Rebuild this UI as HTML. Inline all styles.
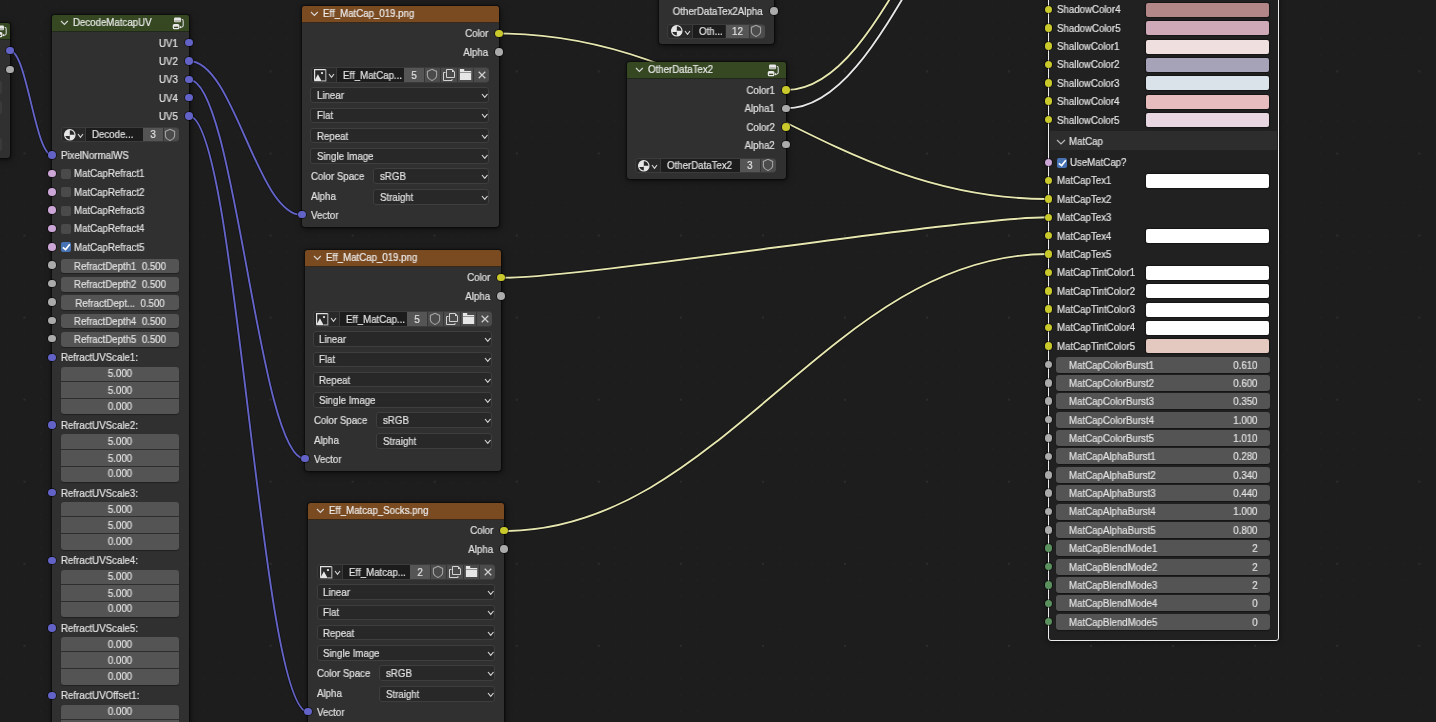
<!DOCTYPE html>
<html><head><meta charset="utf-8"><style>
html,body{margin:0;padding:0;}
body{width:1436px;height:722px;overflow:hidden;position:relative;background:#1d1d1d;font-family:"Liberation Sans", sans-serif;}
.t{position:absolute;white-space:nowrap;line-height:14px;height:14px;will-change:transform;-webkit-text-stroke:0.2px currentColor;}
</style></head><body>

<svg style="position:absolute;left:0;top:0" width="1436" height="722"><defs><pattern id="gm" x="7.2" y="5.2" width="16.41" height="16.41" patternUnits="userSpaceOnUse"><circle cx="0.7" cy="0.7" r="0.6" fill="#242424"/></pattern><pattern id="gM" x="23.5" y="70.5" width="82.05" height="82.05" patternUnits="userSpaceOnUse"><circle cx="0.9" cy="0.9" r="1.05" fill="#2e2e2e"/></pattern></defs><rect width="1436" height="722" fill="url(#gm)"/><rect width="1436" height="722" fill="url(#gM)"/><path d="M10 50.7 C26.80 50.7 35.20 155 52 155" fill="none" stroke="rgba(0,0,0,0.45)" stroke-width="3.3"/><path d="M10 50.7 C26.80 50.7 35.20 155 52 155" fill="none" stroke="#6464c8" stroke-width="1.9"/><path d="M189 61 C234.20 61 256.80 215 302 215" fill="none" stroke="rgba(0,0,0,0.45)" stroke-width="3.3"/><path d="M189 61 C234.20 61 256.80 215 302 215" fill="none" stroke="#6464c8" stroke-width="1.9"/><path d="M189 79.5 C235.40 79.5 258.60 459 305 459" fill="none" stroke="rgba(0,0,0,0.45)" stroke-width="3.3"/><path d="M189 79.5 C235.40 79.5 258.60 459 305 459" fill="none" stroke="#6464c8" stroke-width="1.9"/><path d="M189 116 C236.60 116 260.40 712 308 712" fill="none" stroke="rgba(0,0,0,0.45)" stroke-width="3.3"/><path d="M189 116 C236.60 116 260.40 712 308 712" fill="none" stroke="#6464c8" stroke-width="1.9"/><path d="M498.5 33.5 C718.30 33.5 828.20 199 1048 199" fill="none" stroke="rgba(0,0,0,0.45)" stroke-width="3.3"/><path d="M498.5 33.5 C718.30 33.5 828.20 199 1048 199" fill="none" stroke="#e6e6b0" stroke-width="1.9"/><path d="M501.5 277.8 C589.23 277.8 960.27 217.3 1048 217.3" fill="none" stroke="rgba(0,0,0,0.45)" stroke-width="3.3"/><path d="M501.5 277.8 C589.23 277.8 960.27 217.3 1048 217.3" fill="none" stroke="#e6e6b0" stroke-width="1.9"/><path d="M504 531 C721.60 531 830.40 254 1048 254" fill="none" stroke="rgba(0,0,0,0.45)" stroke-width="3.3"/><path d="M504 531 C721.60 531 830.40 254 1048 254" fill="none" stroke="#e6e6b0" stroke-width="1.9"/><path d="M786 90 C890.80 90 943.20 -185 1048 -185" fill="none" stroke="rgba(0,0,0,0.45)" stroke-width="3.3"/><path d="M786 90 C890.80 90 943.20 -185 1048 -185" fill="none" stroke="#e6e6b0" stroke-width="1.9"/><path d="M786 108.4 C890.80 108.4 943.20 -160 1048 -160" fill="none" stroke="rgba(0,0,0,0.45)" stroke-width="3.3"/><path d="M786 108.4 C890.80 108.4 943.20 -160 1048 -160" fill="none" stroke="#e6e6e6" stroke-width="1.9"/></svg>
<div style="position:absolute;left:-40px;top:23px;width:50px;height:135px;background:#303030;border-radius:3px;box-shadow:0 0 1.5px 0.5px rgba(0,0,0,0.5), 1px 2px 7px rgba(0,0,0,0.5)"></div>
<div style="position:absolute;left:-40px;top:23px;width:50px;height:16px;background:#354822;border-radius:3px 3px 0 0;box-shadow:0 1px 0 #21271b"></div>
<svg style="position:absolute;left:-5px;top:25px" width="13" height="13"><rect x="2" y="0.4" width="7" height="4.9" rx="1.2" fill="#e8e8e8"/><rect x="2.5" y="3.4" width="6" height="1.2" fill="#9aa08f"/><rect x="1.4" y="7.6" width="5.4" height="4.1" rx="1" fill="none" stroke="#e8e8e8" stroke-width="1.3"/><rect x="1.4" y="7.8" width="5.4" height="1.9" fill="#e8e8e8"/><path d="M9.6 2.2 Q11.2 2.2 11.2 4 L11.2 8.6 Q11.2 10.2 9.4 10.2 L8.4 10.2" fill="none" stroke="#d8d8d8" stroke-width="1.1"/><path d="M7.4 10.2 L9 8.8 L9 11.6 Z" fill="#e8e8e8"/></svg>
<div style="position:absolute;left:-40px;top:81.3px;width:41.5px;height:13px;background:#3a3a3a;border-radius:2px;"></div>
<div style="position:absolute;left:-40px;top:101px;width:41.5px;height:13px;background:#3a3a3a;border-radius:2px;"></div>
<div style="position:absolute;left:-40px;top:138.4px;width:41.5px;height:13px;background:#3a3a3a;border-radius:2px;"></div>
<div style="position:absolute;left:6.20px;top:46.90px;width:7.60px;height:7.60px;border-radius:50%;background:#6363c7;box-shadow:0 0 0 0.8px rgba(0,0,0,0.6)"></div>
<div style="position:absolute;left:6.20px;top:65.60px;width:7.60px;height:7.60px;border-radius:50%;background:#ababab;box-shadow:0 0 0 0.8px rgba(0,0,0,0.6)"></div>
<div style="position:absolute;left:52px;top:15px;width:137px;height:740px;background:#303030;border-radius:3px;box-shadow:0 0 1.5px 0.5px rgba(0,0,0,0.5), 1px 2px 7px rgba(0,0,0,0.5)"></div>
<div style="position:absolute;left:52px;top:15px;width:137px;height:16px;background:#354822;border-radius:3px 3px 0 0;box-shadow:0 1px 0 #21271b"></div>
<svg style="position:absolute;left:60px;top:20.2px" width="8.8" height="5.5"><path d="M1 1 L4.4 4.5 L7.8 1" fill="none" stroke="#d8d8d8" stroke-width="1.1"/></svg>
<div class="t" style="left:73px;top:16.20px;font-size:10.2px;color:#ececec;transform:scaleX(0.95);transform-origin:0 50%;">DecodeMatcapUV</div>
<svg style="position:absolute;left:172px;top:16.5px" width="13" height="13"><rect x="2" y="0.4" width="7" height="4.9" rx="1.2" fill="#e8e8e8"/><rect x="2.5" y="3.4" width="6" height="1.2" fill="#9aa08f"/><rect x="1.4" y="7.6" width="5.4" height="4.1" rx="1" fill="none" stroke="#e8e8e8" stroke-width="1.3"/><rect x="1.4" y="7.8" width="5.4" height="1.9" fill="#e8e8e8"/><path d="M9.6 2.2 Q11.2 2.2 11.2 4 L11.2 8.6 Q11.2 10.2 9.4 10.2 L8.4 10.2" fill="none" stroke="#d8d8d8" stroke-width="1.1"/><path d="M7.4 10.2 L9 8.8 L9 11.6 Z" fill="#e8e8e8"/></svg>
<div class="t" style="right:1258px;top:36.60px;font-size:10.2px;color:#e2e2e2;text-align:right;transform:scaleX(0.95);transform-origin:100% 50%;">UV1</div>
<div style="position:absolute;left:185.20px;top:38.90px;width:7.60px;height:7.60px;border-radius:50%;background:#6363c7;box-shadow:0 0 0 0.8px rgba(0,0,0,0.6)"></div>
<div class="t" style="right:1258px;top:54.90px;font-size:10.2px;color:#e2e2e2;text-align:right;transform:scaleX(0.95);transform-origin:100% 50%;">UV2</div>
<div style="position:absolute;left:185.20px;top:57.20px;width:7.60px;height:7.60px;border-radius:50%;background:#6363c7;box-shadow:0 0 0 0.8px rgba(0,0,0,0.6)"></div>
<div class="t" style="right:1258px;top:73.20px;font-size:10.2px;color:#e2e2e2;text-align:right;transform:scaleX(0.95);transform-origin:100% 50%;">UV3</div>
<div style="position:absolute;left:185.20px;top:75.50px;width:7.60px;height:7.60px;border-radius:50%;background:#6363c7;box-shadow:0 0 0 0.8px rgba(0,0,0,0.6)"></div>
<div class="t" style="right:1258px;top:91.50px;font-size:10.2px;color:#e2e2e2;text-align:right;transform:scaleX(0.95);transform-origin:100% 50%;">UV4</div>
<div style="position:absolute;left:185.20px;top:93.80px;width:7.60px;height:7.60px;border-radius:50%;background:#6363c7;box-shadow:0 0 0 0.8px rgba(0,0,0,0.6)"></div>
<div class="t" style="right:1258px;top:109.90px;font-size:10.2px;color:#e2e2e2;text-align:right;transform:scaleX(0.95);transform-origin:100% 50%;">UV5</div>
<div style="position:absolute;left:185.20px;top:112.20px;width:7.60px;height:7.60px;border-radius:50%;background:#6363c7;box-shadow:0 0 0 0.8px rgba(0,0,0,0.6)"></div>
<div style="position:absolute;box-sizing:border-box;left:61px;top:127.2px;width:117.80000000000001px;height:15.2px;background:#282828;border:1px solid #3b3b3b;border-radius:3px"></div>
<div style="position:absolute;left:85px;top:128.2px;width:1px;height:13.2px;background:#3b3b3b;border-radius:0;"></div>
<div style="position:absolute;left:86px;top:128.2px;width:57px;height:13.2px;background:#1c1c1c;border-radius:0;"></div>
<div style="position:absolute;left:143px;top:128.2px;width:20px;height:13.2px;background:#555555;border-radius:0;"></div>
<div style="position:absolute;left:164px;top:128.2px;width:14.800000000000011px;height:13.2px;background:#4b4b4b;border-radius:0 3px 3px 0;"></div>
<div style="position:absolute;left:163px;top:128.2px;width:1px;height:13.2px;background:#363636;border-radius:0;"></div>
<svg style="position:absolute;left:63.00px;top:128.00px" width="13.60" height="13.60" viewBox="-6.80 -6.80 13.60 13.60"><circle cx="0" cy="0" r="5.20" fill="none" stroke="#e6e6e6" stroke-width="1.2"/><path d="M0 1.3 L0 -5.20 A5.20 5.20 0 0 0 -5.05 1.3 Z" fill="#e6e6e6"/><path d="M0 0 L5.20 0 A5.20 5.20 0 0 1 0 5.20 Z" fill="#e6e6e6"/></svg>
<svg style="position:absolute;left:77.2px;top:133.20000000000002px" width="7" height="5.4"><path d="M1 1 L3.5 4.4 L6 1" fill="none" stroke="#d8d8d8" stroke-width="1.1"/></svg>
<div class="t" style="left:91.5px;top:128.40px;font-size:10.2px;color:#e2e2e2;transform:scaleX(0.95);transform-origin:0 50%;">Decode...</div>
<div class="t" style="left:143px;width:20px;top:128.40px;font-size:10.2px;color:#e2e2e2;text-align:center;transform:scaleX(0.95);transform-origin:50% 50%;">3</div>
<svg style="position:absolute;left:164.40px;top:127.80px" width="12" height="14"><path d="M6 1.3 L10.6 3.4 L10.6 8 Q10.2 10.6 6 12.5 Q1.8 10.6 1.4 8 L1.4 3.4 Z" fill="none" stroke="#a4a4a4" stroke-width="1.1" stroke-linejoin="miter"/></svg>
<div class="t" style="left:61px;top:148.90px;font-size:10.2px;color:#e2e2e2;transform:scaleX(0.95);transform-origin:0 50%;">PixelNormalWS</div>
<div style="position:absolute;left:48.20px;top:151.20px;width:7.60px;height:7.60px;border-radius:50%;background:#6363c7;box-shadow:0 0 0 0.8px rgba(0,0,0,0.6)"></div>
<div style="position:absolute;left:48.20px;top:169.70px;width:7.60px;height:7.60px;border-radius:50%;background:#cca6d6;box-shadow:0 0 0 0.8px rgba(0,0,0,0.6)"></div>
<div style="position:absolute;left:61px;top:168.9px;width:10px;height:10px;background:#4a4a4a;border-radius:2px"></div>
<div class="t" style="left:74px;top:167.40px;font-size:10.2px;color:#e2e2e2;transform:scaleX(0.95);transform-origin:0 50%;">MatCapRefract1</div>
<div style="position:absolute;left:48.20px;top:188.05px;width:7.60px;height:7.60px;border-radius:50%;background:#cca6d6;box-shadow:0 0 0 0.8px rgba(0,0,0,0.6)"></div>
<div style="position:absolute;left:61px;top:187.25px;width:10px;height:10px;background:#4a4a4a;border-radius:2px"></div>
<div class="t" style="left:74px;top:185.75px;font-size:10.2px;color:#e2e2e2;transform:scaleX(0.95);transform-origin:0 50%;">MatCapRefract2</div>
<div style="position:absolute;left:48.20px;top:206.40px;width:7.60px;height:7.60px;border-radius:50%;background:#cca6d6;box-shadow:0 0 0 0.8px rgba(0,0,0,0.6)"></div>
<div style="position:absolute;left:61px;top:205.6px;width:10px;height:10px;background:#4a4a4a;border-radius:2px"></div>
<div class="t" style="left:74px;top:204.10px;font-size:10.2px;color:#e2e2e2;transform:scaleX(0.95);transform-origin:0 50%;">MatCapRefract3</div>
<div style="position:absolute;left:48.20px;top:224.75px;width:7.60px;height:7.60px;border-radius:50%;background:#cca6d6;box-shadow:0 0 0 0.8px rgba(0,0,0,0.6)"></div>
<div style="position:absolute;left:61px;top:223.95000000000002px;width:10px;height:10px;background:#4a4a4a;border-radius:2px"></div>
<div class="t" style="left:74px;top:222.45px;font-size:10.2px;color:#e2e2e2;transform:scaleX(0.95);transform-origin:0 50%;">MatCapRefract4</div>
<div style="position:absolute;left:48.20px;top:243.10px;width:7.60px;height:7.60px;border-radius:50%;background:#cca6d6;box-shadow:0 0 0 0.8px rgba(0,0,0,0.6)"></div>
<div style="position:absolute;left:61px;top:242.3px;width:10px;height:10px;background:#4772b3;border-radius:2px"></div>
<svg style="position:absolute;left:61px;top:242.3px" width="10" height="10"><path d="M1.8 5.4 L4.6 7.6 L8.8 2.2" fill="none" stroke="#fff" stroke-width="1.7"/></svg>
<div class="t" style="left:74px;top:240.80px;font-size:10.2px;color:#e2e2e2;transform:scaleX(0.95);transform-origin:0 50%;">MatCapRefract5</div>
<div style="position:absolute;left:48.20px;top:261.45px;width:7.60px;height:7.60px;border-radius:50%;background:#ababab;box-shadow:0 0 0 0.8px rgba(0,0,0,0.6)"></div>
<div style="position:absolute;left:61px;top:258.55px;width:118px;height:14.8px;background:#545454;border-radius:3px;box-shadow:0 1px 1px rgba(0,0,0,0.35)"></div>
<div class="t" style="left:61px;width:118px;top:259.85px;font-size:10.2px;color:#e2e2e2;text-align:center;transform:scaleX(0.95);transform-origin:50% 50%;">RefractDepth1&nbsp;&nbsp;0.500</div>
<div style="position:absolute;left:48.20px;top:279.80px;width:7.60px;height:7.60px;border-radius:50%;background:#ababab;box-shadow:0 0 0 0.8px rgba(0,0,0,0.6)"></div>
<div style="position:absolute;left:61px;top:276.90000000000003px;width:118px;height:14.8px;background:#545454;border-radius:3px;box-shadow:0 1px 1px rgba(0,0,0,0.35)"></div>
<div class="t" style="left:61px;width:118px;top:278.20px;font-size:10.2px;color:#e2e2e2;text-align:center;transform:scaleX(0.95);transform-origin:50% 50%;">RefractDepth2&nbsp;&nbsp;0.500</div>
<div style="position:absolute;left:48.20px;top:298.15px;width:7.60px;height:7.60px;border-radius:50%;background:#ababab;box-shadow:0 0 0 0.8px rgba(0,0,0,0.6)"></div>
<div style="position:absolute;left:61px;top:295.25px;width:118px;height:14.8px;background:#545454;border-radius:3px;box-shadow:0 1px 1px rgba(0,0,0,0.35)"></div>
<div class="t" style="left:61px;width:118px;top:296.55px;font-size:10.2px;color:#e2e2e2;text-align:center;transform:scaleX(0.95);transform-origin:50% 50%;">RefractDept...&nbsp;&nbsp;0.500</div>
<div style="position:absolute;left:48.20px;top:316.50px;width:7.60px;height:7.60px;border-radius:50%;background:#ababab;box-shadow:0 0 0 0.8px rgba(0,0,0,0.6)"></div>
<div style="position:absolute;left:61px;top:313.6px;width:118px;height:14.8px;background:#545454;border-radius:3px;box-shadow:0 1px 1px rgba(0,0,0,0.35)"></div>
<div class="t" style="left:61px;width:118px;top:314.90px;font-size:10.2px;color:#e2e2e2;text-align:center;transform:scaleX(0.95);transform-origin:50% 50%;">RefractDepth4&nbsp;&nbsp;0.500</div>
<div style="position:absolute;left:48.20px;top:334.85px;width:7.60px;height:7.60px;border-radius:50%;background:#ababab;box-shadow:0 0 0 0.8px rgba(0,0,0,0.6)"></div>
<div style="position:absolute;left:61px;top:331.95px;width:118px;height:14.8px;background:#545454;border-radius:3px;box-shadow:0 1px 1px rgba(0,0,0,0.35)"></div>
<div class="t" style="left:61px;width:118px;top:333.25px;font-size:10.2px;color:#e2e2e2;text-align:center;transform:scaleX(0.95);transform-origin:50% 50%;">RefractDepth5&nbsp;&nbsp;0.500</div>
<div style="position:absolute;left:48.20px;top:353.70px;width:7.60px;height:7.60px;border-radius:50%;background:#6363c7;box-shadow:0 0 0 0.8px rgba(0,0,0,0.6)"></div>
<div class="t" style="left:61px;top:351.40px;font-size:10.2px;color:#e2e2e2;transform:scaleX(0.95);transform-origin:0 50%;">RefractUVScale1:</div>
<div style="position:absolute;left:61px;top:366.70px;width:118px;height:47.7px;background:#545454;border-radius:3px;box-shadow:0 1px 1px rgba(0,0,0,0.35)"></div>
<div style="position:absolute;left:61px;top:380.90px;width:118px;height:1px;background:#2e2e2e;border-radius:0;"></div>
<div style="position:absolute;left:61px;top:398.00px;width:118px;height:1px;background:#2e2e2e;border-radius:0;"></div>
<div class="t" style="left:61px;width:118px;top:367.40px;font-size:10.2px;color:#e2e2e2;text-align:center;transform:scaleX(0.95);transform-origin:50% 50%;">5.000</div>
<div class="t" style="left:61px;width:118px;top:383.90px;font-size:10.2px;color:#e2e2e2;text-align:center;transform:scaleX(0.95);transform-origin:50% 50%;">5.000</div>
<div class="t" style="left:61px;width:118px;top:399.60px;font-size:10.2px;color:#e2e2e2;text-align:center;transform:scaleX(0.95);transform-origin:50% 50%;">0.000</div>
<div style="position:absolute;left:48.20px;top:421.30px;width:7.60px;height:7.60px;border-radius:50%;background:#6363c7;box-shadow:0 0 0 0.8px rgba(0,0,0,0.6)"></div>
<div class="t" style="left:61px;top:419.00px;font-size:10.2px;color:#e2e2e2;transform:scaleX(0.95);transform-origin:0 50%;">RefractUVScale2:</div>
<div style="position:absolute;left:61px;top:434.30px;width:118px;height:47.7px;background:#545454;border-radius:3px;box-shadow:0 1px 1px rgba(0,0,0,0.35)"></div>
<div style="position:absolute;left:61px;top:448.50px;width:118px;height:1px;background:#2e2e2e;border-radius:0;"></div>
<div style="position:absolute;left:61px;top:465.60px;width:118px;height:1px;background:#2e2e2e;border-radius:0;"></div>
<div class="t" style="left:61px;width:118px;top:435.00px;font-size:10.2px;color:#e2e2e2;text-align:center;transform:scaleX(0.95);transform-origin:50% 50%;">5.000</div>
<div class="t" style="left:61px;width:118px;top:451.50px;font-size:10.2px;color:#e2e2e2;text-align:center;transform:scaleX(0.95);transform-origin:50% 50%;">5.000</div>
<div class="t" style="left:61px;width:118px;top:467.20px;font-size:10.2px;color:#e2e2e2;text-align:center;transform:scaleX(0.95);transform-origin:50% 50%;">0.000</div>
<div style="position:absolute;left:48.20px;top:488.90px;width:7.60px;height:7.60px;border-radius:50%;background:#6363c7;box-shadow:0 0 0 0.8px rgba(0,0,0,0.6)"></div>
<div class="t" style="left:61px;top:486.60px;font-size:10.2px;color:#e2e2e2;transform:scaleX(0.95);transform-origin:0 50%;">RefractUVScale3:</div>
<div style="position:absolute;left:61px;top:501.90px;width:118px;height:47.7px;background:#545454;border-radius:3px;box-shadow:0 1px 1px rgba(0,0,0,0.35)"></div>
<div style="position:absolute;left:61px;top:516.10px;width:118px;height:1px;background:#2e2e2e;border-radius:0;"></div>
<div style="position:absolute;left:61px;top:533.20px;width:118px;height:1px;background:#2e2e2e;border-radius:0;"></div>
<div class="t" style="left:61px;width:118px;top:502.60px;font-size:10.2px;color:#e2e2e2;text-align:center;transform:scaleX(0.95);transform-origin:50% 50%;">5.000</div>
<div class="t" style="left:61px;width:118px;top:519.10px;font-size:10.2px;color:#e2e2e2;text-align:center;transform:scaleX(0.95);transform-origin:50% 50%;">5.000</div>
<div class="t" style="left:61px;width:118px;top:534.80px;font-size:10.2px;color:#e2e2e2;text-align:center;transform:scaleX(0.95);transform-origin:50% 50%;">0.000</div>
<div style="position:absolute;left:48.20px;top:556.50px;width:7.60px;height:7.60px;border-radius:50%;background:#6363c7;box-shadow:0 0 0 0.8px rgba(0,0,0,0.6)"></div>
<div class="t" style="left:61px;top:554.20px;font-size:10.2px;color:#e2e2e2;transform:scaleX(0.95);transform-origin:0 50%;">RefractUVScale4:</div>
<div style="position:absolute;left:61px;top:569.50px;width:118px;height:47.7px;background:#545454;border-radius:3px;box-shadow:0 1px 1px rgba(0,0,0,0.35)"></div>
<div style="position:absolute;left:61px;top:583.70px;width:118px;height:1px;background:#2e2e2e;border-radius:0;"></div>
<div style="position:absolute;left:61px;top:600.80px;width:118px;height:1px;background:#2e2e2e;border-radius:0;"></div>
<div class="t" style="left:61px;width:118px;top:570.20px;font-size:10.2px;color:#e2e2e2;text-align:center;transform:scaleX(0.95);transform-origin:50% 50%;">5.000</div>
<div class="t" style="left:61px;width:118px;top:586.70px;font-size:10.2px;color:#e2e2e2;text-align:center;transform:scaleX(0.95);transform-origin:50% 50%;">5.000</div>
<div class="t" style="left:61px;width:118px;top:602.40px;font-size:10.2px;color:#e2e2e2;text-align:center;transform:scaleX(0.95);transform-origin:50% 50%;">0.000</div>
<div style="position:absolute;left:48.20px;top:624.10px;width:7.60px;height:7.60px;border-radius:50%;background:#6363c7;box-shadow:0 0 0 0.8px rgba(0,0,0,0.6)"></div>
<div class="t" style="left:61px;top:621.80px;font-size:10.2px;color:#e2e2e2;transform:scaleX(0.95);transform-origin:0 50%;">RefractUVScale5:</div>
<div style="position:absolute;left:61px;top:637.10px;width:118px;height:47.7px;background:#545454;border-radius:3px;box-shadow:0 1px 1px rgba(0,0,0,0.35)"></div>
<div style="position:absolute;left:61px;top:651.30px;width:118px;height:1px;background:#2e2e2e;border-radius:0;"></div>
<div style="position:absolute;left:61px;top:668.40px;width:118px;height:1px;background:#2e2e2e;border-radius:0;"></div>
<div class="t" style="left:61px;width:118px;top:637.80px;font-size:10.2px;color:#e2e2e2;text-align:center;transform:scaleX(0.95);transform-origin:50% 50%;">0.000</div>
<div class="t" style="left:61px;width:118px;top:654.30px;font-size:10.2px;color:#e2e2e2;text-align:center;transform:scaleX(0.95);transform-origin:50% 50%;">0.000</div>
<div class="t" style="left:61px;width:118px;top:670.00px;font-size:10.2px;color:#e2e2e2;text-align:center;transform:scaleX(0.95);transform-origin:50% 50%;">0.000</div>
<div style="position:absolute;left:48.20px;top:691.70px;width:7.60px;height:7.60px;border-radius:50%;background:#6363c7;box-shadow:0 0 0 0.8px rgba(0,0,0,0.6)"></div>
<div class="t" style="left:61px;top:689.40px;font-size:10.2px;color:#e2e2e2;transform:scaleX(0.95);transform-origin:0 50%;">RefractUVOffset1:</div>
<div style="position:absolute;left:61px;top:704.70px;width:118px;height:47.7px;background:#545454;border-radius:3px;box-shadow:0 1px 1px rgba(0,0,0,0.35)"></div>
<div style="position:absolute;left:61px;top:718.90px;width:118px;height:1px;background:#2e2e2e;border-radius:0;"></div>
<div style="position:absolute;left:61px;top:736.00px;width:118px;height:1px;background:#2e2e2e;border-radius:0;"></div>
<div class="t" style="left:61px;width:118px;top:705.40px;font-size:10.2px;color:#e2e2e2;text-align:center;transform:scaleX(0.95);transform-origin:50% 50%;">0.000</div>
<div class="t" style="left:61px;width:118px;top:721.90px;font-size:10.2px;color:#e2e2e2;text-align:center;transform:scaleX(0.95);transform-origin:50% 50%;">0.000</div>
<div class="t" style="left:61px;width:118px;top:737.60px;font-size:10.2px;color:#e2e2e2;text-align:center;transform:scaleX(0.95);transform-origin:50% 50%;">0.000</div>
<div style="position:absolute;left:302px;top:6px;width:197px;height:221px;background:#303030;border-radius:3px;box-shadow:0 0 1.5px 0.5px rgba(0,0,0,0.5), 1px 2px 7px rgba(0,0,0,0.5)"></div>
<div style="position:absolute;left:302px;top:6px;width:197px;height:16px;background:#7a4a20;border-radius:3px 3px 0 0;box-shadow:0 1px 0 #38281a"></div>
<svg style="position:absolute;left:310px;top:11.2px" width="8.8" height="5.5"><path d="M1 1 L4.4 4.5 L7.8 1" fill="none" stroke="#d8d8d8" stroke-width="1.1"/></svg>
<div class="t" style="left:323px;top:7.20px;font-size:10.2px;color:#ececec;transform:scaleX(0.95);transform-origin:0 50%;">Eff_MatCap_019.png</div>
<div class="t" style="right:947.5px;top:27.40px;font-size:10.2px;color:#e2e2e2;text-align:right;transform:scaleX(0.95);transform-origin:100% 50%;">Color</div>
<div style="position:absolute;left:495.20px;top:29.70px;width:7.60px;height:7.60px;border-radius:50%;background:#c9c92b;box-shadow:0 0 0 0.8px rgba(0,0,0,0.6)"></div>
<div class="t" style="right:947.5px;top:46.10px;font-size:10.2px;color:#e2e2e2;text-align:right;transform:scaleX(0.95);transform-origin:100% 50%;">Alpha</div>
<div style="position:absolute;left:495.20px;top:48.40px;width:7.60px;height:7.60px;border-radius:50%;background:#ababab;box-shadow:0 0 0 0.8px rgba(0,0,0,0.6)"></div>
<div style="position:absolute;box-sizing:border-box;left:311px;top:67.4px;width:178px;height:15.2px;background:#282828;border:1px solid #3b3b3b;border-radius:3px"></div>
<div style="position:absolute;left:336px;top:68.4px;width:1px;height:13.2px;background:#3b3b3b;border-radius:0;"></div>
<div style="position:absolute;left:337px;top:68.4px;width:67.19999999999999px;height:13.2px;background:#1c1c1c;border-radius:0;"></div>
<div style="position:absolute;left:404.2px;top:68.4px;width:20.0px;height:13.2px;background:#555555;border-radius:0;"></div>
<div style="position:absolute;left:425.2px;top:68.4px;width:15.199999999999989px;height:13.2px;background:#4b4b4b;border-radius:0;"></div>
<div style="position:absolute;left:424.2px;top:68.4px;width:1px;height:13.2px;background:#363636;border-radius:0;"></div>
<div style="position:absolute;left:441.4px;top:68.4px;width:15.600000000000023px;height:13.2px;background:#4b4b4b;border-radius:0;"></div>
<div style="position:absolute;left:440.4px;top:68.4px;width:1px;height:13.2px;background:#363636;border-radius:0;"></div>
<div style="position:absolute;left:458px;top:68.4px;width:15.300000000000011px;height:13.2px;background:#4b4b4b;border-radius:0;"></div>
<div style="position:absolute;left:457px;top:68.4px;width:1px;height:13.2px;background:#363636;border-radius:0;"></div>
<div style="position:absolute;left:474.3px;top:68.4px;width:14.699999999999989px;height:13.2px;background:#4b4b4b;border-radius:0 3px 3px 0;"></div>
<div style="position:absolute;left:473.3px;top:68.4px;width:1px;height:13.2px;background:#363636;border-radius:0;"></div>
<svg style="position:absolute;left:314.00px;top:69.00px" width="13" height="13"><path d="M0.6 11.8 L0.6 0.6 L11.8 0.6" fill="none" stroke="#e0e0e0" stroke-width="1.2"/><path d="M11.8 0.6 L11.8 11.8 L7.6 11.8" fill="none" stroke="#a8a8a8" stroke-width="1.2"/><path d="M0.2 12.2 L3.9 5.3 L7.7 12.2 Z" fill="#e6e6e6"/><circle cx="8" cy="4.1" r="1.15" fill="#e6e6e6"/></svg>
<svg style="position:absolute;left:328px;top:73.4px" width="7" height="5.4"><path d="M1 1 L3.5 4.4 L6 1" fill="none" stroke="#d8d8d8" stroke-width="1.1"/></svg>
<div class="t" style="left:342.5px;top:68.60px;font-size:10.2px;color:#e2e2e2;transform:scaleX(0.95);transform-origin:0 50%;">Eff_MatCap...</div>
<div class="t" style="left:404.2px;width:20.0px;top:68.60px;font-size:10.2px;color:#e2e2e2;text-align:center;transform:scaleX(0.95);transform-origin:50% 50%;">5</div>
<svg style="position:absolute;left:425.80px;top:68.00px" width="12" height="14"><path d="M6 1.3 L10.6 3.4 L10.6 8 Q10.2 10.6 6 12.5 Q1.8 10.6 1.4 8 L1.4 3.4 Z" fill="none" stroke="#a4a4a4" stroke-width="1.1" stroke-linejoin="miter"/></svg>
<svg style="position:absolute;left:440.40px;top:68.00px" width="17" height="15"><path d="M5.5 4.5 L3.5 4.5 L3.5 12.5 L12 12.5 L12 11" fill="none" stroke="#d2d2d2" stroke-width="1"/><path d="M6.5 1.5 L12.2 1.5 L14.5 3.8 L14.5 9.5 L6.5 9.5 Z" fill="#4b4b4b" stroke="#d2d2d2" stroke-width="1"/><path d="M12 1.5 L14.5 4 L12 4 Z" fill="#e0e0e0"/></svg>
<svg style="position:absolute;left:457.00px;top:67.40px" width="17" height="15"><path d="M2.9 2 L7.2 2 L7.2 3.9 L14.2 3.9 L14.2 12.9 L2.9 12.9 Z" fill="#e6e6e6"/><rect x="2.9" y="5" width="11.3" height="0.9" fill="#8a8a8a"/></svg>
<svg style="position:absolute;left:476.65px;top:70.00px" width="10" height="10"><path d="M1.7 1.8 L8.3 8.2 M8.3 1.8 L1.7 8.2" stroke="#d0d0d0" stroke-width="1.25"/></svg>
<div style="position:absolute;left:310.4px;top:87.3px;width:176.9px;height:13.5px;background:#282828;border:1px solid #3e3e3e;border-radius:3px"></div>
<div class="t" style="left:316.9px;top:88.95px;font-size:10.2px;color:#e2e2e2;transform:scaleX(0.95);transform-origin:0 50%;">Linear</div>
<svg style="position:absolute;left:480.49999999999994px;top:92.95px" width="7.5" height="5.3"><path d="M1 1 L3.75 4.3 L6.5 1" fill="none" stroke="#d8d8d8" stroke-width="1.15"/></svg>
<div style="position:absolute;left:310.4px;top:107.6px;width:176.9px;height:13.5px;background:#282828;border:1px solid #3e3e3e;border-radius:3px"></div>
<div class="t" style="left:316.9px;top:109.25px;font-size:10.2px;color:#e2e2e2;transform:scaleX(0.95);transform-origin:0 50%;">Flat</div>
<svg style="position:absolute;left:480.49999999999994px;top:113.25px" width="7.5" height="5.3"><path d="M1 1 L3.75 4.3 L6.5 1" fill="none" stroke="#d8d8d8" stroke-width="1.15"/></svg>
<div style="position:absolute;left:310.4px;top:127.9px;width:176.9px;height:13.5px;background:#282828;border:1px solid #3e3e3e;border-radius:3px"></div>
<div class="t" style="left:316.9px;top:129.55px;font-size:10.2px;color:#e2e2e2;transform:scaleX(0.95);transform-origin:0 50%;">Repeat</div>
<svg style="position:absolute;left:480.49999999999994px;top:133.55px" width="7.5" height="5.3"><path d="M1 1 L3.75 4.3 L6.5 1" fill="none" stroke="#d8d8d8" stroke-width="1.15"/></svg>
<div style="position:absolute;left:310.4px;top:148.2px;width:176.9px;height:13.5px;background:#282828;border:1px solid #3e3e3e;border-radius:3px"></div>
<div class="t" style="left:316.9px;top:149.85px;font-size:10.2px;color:#e2e2e2;transform:scaleX(0.95);transform-origin:0 50%;">Single Image</div>
<svg style="position:absolute;left:480.49999999999994px;top:153.85px" width="7.5" height="5.3"><path d="M1 1 L3.75 4.3 L6.5 1" fill="none" stroke="#d8d8d8" stroke-width="1.15"/></svg>
<div class="t" style="left:311px;top:169.60px;font-size:10.2px;color:#e2e2e2;transform:scaleX(0.95);transform-origin:0 50%;">Color Space</div>
<div style="position:absolute;left:373.4px;top:168.2px;width:114px;height:13.5px;background:#282828;border:1px solid #3e3e3e;border-radius:3px"></div>
<div class="t" style="left:379.9px;top:169.85px;font-size:10.2px;color:#e2e2e2;transform:scaleX(0.95);transform-origin:0 50%;">sRGB</div>
<svg style="position:absolute;left:480.59999999999997px;top:173.85px" width="7.5" height="5.3"><path d="M1 1 L3.75 4.3 L6.5 1" fill="none" stroke="#d8d8d8" stroke-width="1.15"/></svg>
<div class="t" style="left:311px;top:190.40px;font-size:10.2px;color:#e2e2e2;transform:scaleX(0.95);transform-origin:0 50%;">Alpha</div>
<div style="position:absolute;left:373.4px;top:189px;width:114px;height:13.5px;background:#282828;border:1px solid #3e3e3e;border-radius:3px"></div>
<div class="t" style="left:379.9px;top:190.65px;font-size:10.2px;color:#e2e2e2;transform:scaleX(0.95);transform-origin:0 50%;">Straight</div>
<svg style="position:absolute;left:480.59999999999997px;top:194.65px" width="7.5" height="5.3"><path d="M1 1 L3.75 4.3 L6.5 1" fill="none" stroke="#d8d8d8" stroke-width="1.15"/></svg>
<div class="t" style="left:311px;top:208.60px;font-size:10.2px;color:#e2e2e2;transform:scaleX(0.95);transform-origin:0 50%;">Vector</div>
<div style="position:absolute;left:298.20px;top:210.90px;width:7.60px;height:7.60px;border-radius:50%;background:#6363c7;box-shadow:0 0 0 0.8px rgba(0,0,0,0.6)"></div>
<div style="position:absolute;left:305px;top:250px;width:196px;height:221px;background:#303030;border-radius:3px;box-shadow:0 0 1.5px 0.5px rgba(0,0,0,0.5), 1px 2px 7px rgba(0,0,0,0.5)"></div>
<div style="position:absolute;left:305px;top:250px;width:196px;height:16px;background:#7a4a20;border-radius:3px 3px 0 0;box-shadow:0 1px 0 #38281a"></div>
<svg style="position:absolute;left:313px;top:255.2px" width="8.8" height="5.5"><path d="M1 1 L4.4 4.5 L7.8 1" fill="none" stroke="#d8d8d8" stroke-width="1.1"/></svg>
<div class="t" style="left:326px;top:251.20px;font-size:10.2px;color:#ececec;transform:scaleX(0.95);transform-origin:0 50%;">Eff_MatCap_019.png</div>
<div class="t" style="right:945.5px;top:271.40px;font-size:10.2px;color:#e2e2e2;text-align:right;transform:scaleX(0.95);transform-origin:100% 50%;">Color</div>
<div style="position:absolute;left:497.20px;top:273.70px;width:7.60px;height:7.60px;border-radius:50%;background:#c9c92b;box-shadow:0 0 0 0.8px rgba(0,0,0,0.6)"></div>
<div class="t" style="right:945.5px;top:290.10px;font-size:10.2px;color:#e2e2e2;text-align:right;transform:scaleX(0.95);transform-origin:100% 50%;">Alpha</div>
<div style="position:absolute;left:497.20px;top:292.40px;width:7.60px;height:7.60px;border-radius:50%;background:#ababab;box-shadow:0 0 0 0.8px rgba(0,0,0,0.6)"></div>
<div style="position:absolute;box-sizing:border-box;left:313.1px;top:311.4px;width:178.89999999999998px;height:15.2px;background:#282828;border:1px solid #3b3b3b;border-radius:3px"></div>
<div style="position:absolute;left:339px;top:312.4px;width:1px;height:13.2px;background:#3b3b3b;border-radius:0;"></div>
<div style="position:absolute;left:340px;top:312.4px;width:67.19999999999999px;height:13.2px;background:#1c1c1c;border-radius:0;"></div>
<div style="position:absolute;left:407.2px;top:312.4px;width:20.0px;height:13.2px;background:#555555;border-radius:0;"></div>
<div style="position:absolute;left:428.2px;top:312.4px;width:15.199999999999989px;height:13.2px;background:#4b4b4b;border-radius:0;"></div>
<div style="position:absolute;left:427.2px;top:312.4px;width:1px;height:13.2px;background:#363636;border-radius:0;"></div>
<div style="position:absolute;left:444.4px;top:312.4px;width:15.600000000000023px;height:13.2px;background:#4b4b4b;border-radius:0;"></div>
<div style="position:absolute;left:443.4px;top:312.4px;width:1px;height:13.2px;background:#363636;border-radius:0;"></div>
<div style="position:absolute;left:461px;top:312.4px;width:15.300000000000011px;height:13.2px;background:#4b4b4b;border-radius:0;"></div>
<div style="position:absolute;left:460px;top:312.4px;width:1px;height:13.2px;background:#363636;border-radius:0;"></div>
<div style="position:absolute;left:477.3px;top:312.4px;width:14.699999999999989px;height:13.2px;background:#4b4b4b;border-radius:0 3px 3px 0;"></div>
<div style="position:absolute;left:476.3px;top:312.4px;width:1px;height:13.2px;background:#363636;border-radius:0;"></div>
<svg style="position:absolute;left:316.10px;top:313.00px" width="13" height="13"><path d="M0.6 11.8 L0.6 0.6 L11.8 0.6" fill="none" stroke="#e0e0e0" stroke-width="1.2"/><path d="M11.8 0.6 L11.8 11.8 L7.6 11.8" fill="none" stroke="#a8a8a8" stroke-width="1.2"/><path d="M0.2 12.2 L3.9 5.3 L7.7 12.2 Z" fill="#e6e6e6"/><circle cx="8" cy="4.1" r="1.15" fill="#e6e6e6"/></svg>
<svg style="position:absolute;left:330.1px;top:317.4px" width="7" height="5.4"><path d="M1 1 L3.5 4.4 L6 1" fill="none" stroke="#d8d8d8" stroke-width="1.1"/></svg>
<div class="t" style="left:345.5px;top:312.60px;font-size:10.2px;color:#e2e2e2;transform:scaleX(0.95);transform-origin:0 50%;">Eff_MatCap...</div>
<div class="t" style="left:407.2px;width:20.0px;top:312.60px;font-size:10.2px;color:#e2e2e2;text-align:center;transform:scaleX(0.95);transform-origin:50% 50%;">5</div>
<svg style="position:absolute;left:428.80px;top:312.00px" width="12" height="14"><path d="M6 1.3 L10.6 3.4 L10.6 8 Q10.2 10.6 6 12.5 Q1.8 10.6 1.4 8 L1.4 3.4 Z" fill="none" stroke="#a4a4a4" stroke-width="1.1" stroke-linejoin="miter"/></svg>
<svg style="position:absolute;left:443.40px;top:312.00px" width="17" height="15"><path d="M5.5 4.5 L3.5 4.5 L3.5 12.5 L12 12.5 L12 11" fill="none" stroke="#d2d2d2" stroke-width="1"/><path d="M6.5 1.5 L12.2 1.5 L14.5 3.8 L14.5 9.5 L6.5 9.5 Z" fill="#4b4b4b" stroke="#d2d2d2" stroke-width="1"/><path d="M12 1.5 L14.5 4 L12 4 Z" fill="#e0e0e0"/></svg>
<svg style="position:absolute;left:460.00px;top:311.40px" width="17" height="15"><path d="M2.9 2 L7.2 2 L7.2 3.9 L14.2 3.9 L14.2 12.9 L2.9 12.9 Z" fill="#e6e6e6"/><rect x="2.9" y="5" width="11.3" height="0.9" fill="#8a8a8a"/></svg>
<svg style="position:absolute;left:479.65px;top:314.00px" width="10" height="10"><path d="M1.7 1.8 L8.3 8.2 M8.3 1.8 L1.7 8.2" stroke="#d0d0d0" stroke-width="1.25"/></svg>
<div style="position:absolute;left:312.6px;top:331.3px;width:177.70000000000002px;height:13.5px;background:#282828;border:1px solid #3e3e3e;border-radius:3px"></div>
<div class="t" style="left:319.1px;top:332.95px;font-size:10.2px;color:#e2e2e2;transform:scaleX(0.95);transform-origin:0 50%;">Linear</div>
<svg style="position:absolute;left:483.50000000000006px;top:336.95px" width="7.5" height="5.3"><path d="M1 1 L3.75 4.3 L6.5 1" fill="none" stroke="#d8d8d8" stroke-width="1.15"/></svg>
<div style="position:absolute;left:312.6px;top:351.6px;width:177.70000000000002px;height:13.5px;background:#282828;border:1px solid #3e3e3e;border-radius:3px"></div>
<div class="t" style="left:319.1px;top:353.25px;font-size:10.2px;color:#e2e2e2;transform:scaleX(0.95);transform-origin:0 50%;">Flat</div>
<svg style="position:absolute;left:483.50000000000006px;top:357.25px" width="7.5" height="5.3"><path d="M1 1 L3.75 4.3 L6.5 1" fill="none" stroke="#d8d8d8" stroke-width="1.15"/></svg>
<div style="position:absolute;left:312.6px;top:371.90000000000003px;width:177.70000000000002px;height:13.5px;background:#282828;border:1px solid #3e3e3e;border-radius:3px"></div>
<div class="t" style="left:319.1px;top:373.55px;font-size:10.2px;color:#e2e2e2;transform:scaleX(0.95);transform-origin:0 50%;">Repeat</div>
<svg style="position:absolute;left:483.50000000000006px;top:377.55px" width="7.5" height="5.3"><path d="M1 1 L3.75 4.3 L6.5 1" fill="none" stroke="#d8d8d8" stroke-width="1.15"/></svg>
<div style="position:absolute;left:312.6px;top:392.20000000000005px;width:177.70000000000002px;height:13.5px;background:#282828;border:1px solid #3e3e3e;border-radius:3px"></div>
<div class="t" style="left:319.1px;top:393.85px;font-size:10.2px;color:#e2e2e2;transform:scaleX(0.95);transform-origin:0 50%;">Single Image</div>
<svg style="position:absolute;left:483.50000000000006px;top:397.85px" width="7.5" height="5.3"><path d="M1 1 L3.75 4.3 L6.5 1" fill="none" stroke="#d8d8d8" stroke-width="1.15"/></svg>
<div class="t" style="left:314px;top:413.60px;font-size:10.2px;color:#e2e2e2;transform:scaleX(0.95);transform-origin:0 50%;">Color Space</div>
<div style="position:absolute;left:376.4px;top:412.2px;width:114px;height:13.5px;background:#282828;border:1px solid #3e3e3e;border-radius:3px"></div>
<div class="t" style="left:382.9px;top:413.85px;font-size:10.2px;color:#e2e2e2;transform:scaleX(0.95);transform-origin:0 50%;">sRGB</div>
<svg style="position:absolute;left:483.59999999999997px;top:417.84999999999997px" width="7.5" height="5.3"><path d="M1 1 L3.75 4.3 L6.5 1" fill="none" stroke="#d8d8d8" stroke-width="1.15"/></svg>
<div class="t" style="left:314px;top:434.40px;font-size:10.2px;color:#e2e2e2;transform:scaleX(0.95);transform-origin:0 50%;">Alpha</div>
<div style="position:absolute;left:376.4px;top:433px;width:114px;height:13.5px;background:#282828;border:1px solid #3e3e3e;border-radius:3px"></div>
<div class="t" style="left:382.9px;top:434.65px;font-size:10.2px;color:#e2e2e2;transform:scaleX(0.95);transform-origin:0 50%;">Straight</div>
<svg style="position:absolute;left:483.59999999999997px;top:438.65px" width="7.5" height="5.3"><path d="M1 1 L3.75 4.3 L6.5 1" fill="none" stroke="#d8d8d8" stroke-width="1.15"/></svg>
<div class="t" style="left:314px;top:452.60px;font-size:10.2px;color:#e2e2e2;transform:scaleX(0.95);transform-origin:0 50%;">Vector</div>
<div style="position:absolute;left:301.20px;top:454.90px;width:7.60px;height:7.60px;border-radius:50%;background:#6363c7;box-shadow:0 0 0 0.8px rgba(0,0,0,0.6)"></div>
<div style="position:absolute;left:308px;top:503px;width:196px;height:221px;background:#303030;border-radius:3px;box-shadow:0 0 1.5px 0.5px rgba(0,0,0,0.5), 1px 2px 7px rgba(0,0,0,0.5)"></div>
<div style="position:absolute;left:308px;top:503px;width:196px;height:16px;background:#7a4a20;border-radius:3px 3px 0 0;box-shadow:0 1px 0 #38281a"></div>
<svg style="position:absolute;left:316px;top:508.2px" width="8.8" height="5.5"><path d="M1 1 L4.4 4.5 L7.8 1" fill="none" stroke="#d8d8d8" stroke-width="1.1"/></svg>
<div class="t" style="left:329px;top:504.20px;font-size:10.2px;color:#ececec;transform:scaleX(0.95);transform-origin:0 50%;">Eff_Matcap_Socks.png</div>
<div class="t" style="right:942.5px;top:524.40px;font-size:10.2px;color:#e2e2e2;text-align:right;transform:scaleX(0.95);transform-origin:100% 50%;">Color</div>
<div style="position:absolute;left:500.20px;top:526.70px;width:7.60px;height:7.60px;border-radius:50%;background:#c9c92b;box-shadow:0 0 0 0.8px rgba(0,0,0,0.6)"></div>
<div class="t" style="right:942.5px;top:543.10px;font-size:10.2px;color:#e2e2e2;text-align:right;transform:scaleX(0.95);transform-origin:100% 50%;">Alpha</div>
<div style="position:absolute;left:500.20px;top:545.40px;width:7.60px;height:7.60px;border-radius:50%;background:#ababab;box-shadow:0 0 0 0.8px rgba(0,0,0,0.6)"></div>
<div style="position:absolute;box-sizing:border-box;left:316.8px;top:564.4px;width:178.2px;height:15.2px;background:#282828;border:1px solid #3b3b3b;border-radius:3px"></div>
<div style="position:absolute;left:342px;top:565.4px;width:1px;height:13.2px;background:#3b3b3b;border-radius:0;"></div>
<div style="position:absolute;left:343px;top:565.4px;width:67.19999999999999px;height:13.2px;background:#1c1c1c;border-radius:0;"></div>
<div style="position:absolute;left:410.2px;top:565.4px;width:20.0px;height:13.2px;background:#555555;border-radius:0;"></div>
<div style="position:absolute;left:431.2px;top:565.4px;width:15.199999999999989px;height:13.2px;background:#4b4b4b;border-radius:0;"></div>
<div style="position:absolute;left:430.2px;top:565.4px;width:1px;height:13.2px;background:#363636;border-radius:0;"></div>
<div style="position:absolute;left:447.4px;top:565.4px;width:15.600000000000023px;height:13.2px;background:#4b4b4b;border-radius:0;"></div>
<div style="position:absolute;left:446.4px;top:565.4px;width:1px;height:13.2px;background:#363636;border-radius:0;"></div>
<div style="position:absolute;left:464px;top:565.4px;width:15.300000000000011px;height:13.2px;background:#4b4b4b;border-radius:0;"></div>
<div style="position:absolute;left:463px;top:565.4px;width:1px;height:13.2px;background:#363636;border-radius:0;"></div>
<div style="position:absolute;left:480.3px;top:565.4px;width:14.699999999999989px;height:13.2px;background:#4b4b4b;border-radius:0 3px 3px 0;"></div>
<div style="position:absolute;left:479.3px;top:565.4px;width:1px;height:13.2px;background:#363636;border-radius:0;"></div>
<svg style="position:absolute;left:319.80px;top:566.00px" width="13" height="13"><path d="M0.6 11.8 L0.6 0.6 L11.8 0.6" fill="none" stroke="#e0e0e0" stroke-width="1.2"/><path d="M11.8 0.6 L11.8 11.8 L7.6 11.8" fill="none" stroke="#a8a8a8" stroke-width="1.2"/><path d="M0.2 12.2 L3.9 5.3 L7.7 12.2 Z" fill="#e6e6e6"/><circle cx="8" cy="4.1" r="1.15" fill="#e6e6e6"/></svg>
<svg style="position:absolute;left:333.8px;top:570.4px" width="7" height="5.4"><path d="M1 1 L3.5 4.4 L6 1" fill="none" stroke="#d8d8d8" stroke-width="1.1"/></svg>
<div class="t" style="left:348.5px;top:565.60px;font-size:10.2px;color:#e2e2e2;transform:scaleX(0.95);transform-origin:0 50%;">Eff_Matcap...</div>
<div class="t" style="left:410.2px;width:20.0px;top:565.60px;font-size:10.2px;color:#e2e2e2;text-align:center;transform:scaleX(0.95);transform-origin:50% 50%;">2</div>
<svg style="position:absolute;left:431.80px;top:565.00px" width="12" height="14"><path d="M6 1.3 L10.6 3.4 L10.6 8 Q10.2 10.6 6 12.5 Q1.8 10.6 1.4 8 L1.4 3.4 Z" fill="none" stroke="#a4a4a4" stroke-width="1.1" stroke-linejoin="miter"/></svg>
<svg style="position:absolute;left:446.40px;top:565.00px" width="17" height="15"><path d="M5.5 4.5 L3.5 4.5 L3.5 12.5 L12 12.5 L12 11" fill="none" stroke="#d2d2d2" stroke-width="1"/><path d="M6.5 1.5 L12.2 1.5 L14.5 3.8 L14.5 9.5 L6.5 9.5 Z" fill="#4b4b4b" stroke="#d2d2d2" stroke-width="1"/><path d="M12 1.5 L14.5 4 L12 4 Z" fill="#e0e0e0"/></svg>
<svg style="position:absolute;left:463.00px;top:564.40px" width="17" height="15"><path d="M2.9 2 L7.2 2 L7.2 3.9 L14.2 3.9 L14.2 12.9 L2.9 12.9 Z" fill="#e6e6e6"/><rect x="2.9" y="5" width="11.3" height="0.9" fill="#8a8a8a"/></svg>
<svg style="position:absolute;left:482.65px;top:567.00px" width="10" height="10"><path d="M1.7 1.8 L8.3 8.2 M8.3 1.8 L1.7 8.2" stroke="#d0d0d0" stroke-width="1.25"/></svg>
<div style="position:absolute;left:316.8px;top:584.3px;width:176.5px;height:13.5px;background:#282828;border:1px solid #3e3e3e;border-radius:3px"></div>
<div class="t" style="left:323.3px;top:585.95px;font-size:10.2px;color:#e2e2e2;transform:scaleX(0.95);transform-origin:0 50%;">Linear</div>
<svg style="position:absolute;left:486.5px;top:589.9499999999999px" width="7.5" height="5.3"><path d="M1 1 L3.75 4.3 L6.5 1" fill="none" stroke="#d8d8d8" stroke-width="1.15"/></svg>
<div style="position:absolute;left:316.8px;top:604.5999999999999px;width:176.5px;height:13.5px;background:#282828;border:1px solid #3e3e3e;border-radius:3px"></div>
<div class="t" style="left:323.3px;top:606.25px;font-size:10.2px;color:#e2e2e2;transform:scaleX(0.95);transform-origin:0 50%;">Flat</div>
<svg style="position:absolute;left:486.5px;top:610.2499999999999px" width="7.5" height="5.3"><path d="M1 1 L3.75 4.3 L6.5 1" fill="none" stroke="#d8d8d8" stroke-width="1.15"/></svg>
<div style="position:absolute;left:316.8px;top:624.9px;width:176.5px;height:13.5px;background:#282828;border:1px solid #3e3e3e;border-radius:3px"></div>
<div class="t" style="left:323.3px;top:626.55px;font-size:10.2px;color:#e2e2e2;transform:scaleX(0.95);transform-origin:0 50%;">Repeat</div>
<svg style="position:absolute;left:486.5px;top:630.55px" width="7.5" height="5.3"><path d="M1 1 L3.75 4.3 L6.5 1" fill="none" stroke="#d8d8d8" stroke-width="1.15"/></svg>
<div style="position:absolute;left:316.8px;top:645.1999999999999px;width:176.5px;height:13.5px;background:#282828;border:1px solid #3e3e3e;border-radius:3px"></div>
<div class="t" style="left:323.3px;top:646.85px;font-size:10.2px;color:#e2e2e2;transform:scaleX(0.95);transform-origin:0 50%;">Single Image</div>
<svg style="position:absolute;left:486.5px;top:650.8499999999999px" width="7.5" height="5.3"><path d="M1 1 L3.75 4.3 L6.5 1" fill="none" stroke="#d8d8d8" stroke-width="1.15"/></svg>
<div class="t" style="left:317px;top:666.60px;font-size:10.2px;color:#e2e2e2;transform:scaleX(0.95);transform-origin:0 50%;">Color Space</div>
<div style="position:absolute;left:379.4px;top:665.2px;width:114px;height:13.5px;background:#282828;border:1px solid #3e3e3e;border-radius:3px"></div>
<div class="t" style="left:385.9px;top:666.85px;font-size:10.2px;color:#e2e2e2;transform:scaleX(0.95);transform-origin:0 50%;">sRGB</div>
<svg style="position:absolute;left:486.59999999999997px;top:670.85px" width="7.5" height="5.3"><path d="M1 1 L3.75 4.3 L6.5 1" fill="none" stroke="#d8d8d8" stroke-width="1.15"/></svg>
<div class="t" style="left:317px;top:687.40px;font-size:10.2px;color:#e2e2e2;transform:scaleX(0.95);transform-origin:0 50%;">Alpha</div>
<div style="position:absolute;left:379.4px;top:686px;width:114px;height:13.5px;background:#282828;border:1px solid #3e3e3e;border-radius:3px"></div>
<div class="t" style="left:385.9px;top:687.65px;font-size:10.2px;color:#e2e2e2;transform:scaleX(0.95);transform-origin:0 50%;">Straight</div>
<svg style="position:absolute;left:486.59999999999997px;top:691.65px" width="7.5" height="5.3"><path d="M1 1 L3.75 4.3 L6.5 1" fill="none" stroke="#d8d8d8" stroke-width="1.15"/></svg>
<div class="t" style="left:317px;top:705.60px;font-size:10.2px;color:#e2e2e2;transform:scaleX(0.95);transform-origin:0 50%;">Vector</div>
<div style="position:absolute;left:304.20px;top:707.90px;width:7.60px;height:7.60px;border-radius:50%;background:#6363c7;box-shadow:0 0 0 0.8px rgba(0,0,0,0.6)"></div>
<div style="position:absolute;left:659px;top:-30px;width:115px;height:74.3px;background:#303030;border-radius:3px;box-shadow:0 0 1.5px 0.5px rgba(0,0,0,0.5), 1px 2px 7px rgba(0,0,0,0.5)"></div>
<div style="position:absolute;left:659px;top:-30px;width:115px;height:0px;background:#303030;border-radius:3px 3px 0 0;box-shadow:0 1px 0 #1f1f1f"></div>
<div class="t" style="right:673px;top:4.90px;font-size:10.2px;color:#e2e2e2;text-align:right;transform:scaleX(0.95);transform-origin:100% 50%;">OtherDataTex2Alpha</div>
<div style="position:absolute;left:770.20px;top:7.20px;width:7.60px;height:7.60px;border-radius:50%;background:#ababab;box-shadow:0 0 0 0.8px rgba(0,0,0,0.6)"></div>
<div style="position:absolute;box-sizing:border-box;left:666.5px;top:23.8px;width:98.0px;height:14.8px;background:#282828;border:1px solid #3b3b3b;border-radius:3px"></div>
<div style="position:absolute;left:692.4px;top:24.8px;width:1px;height:12.8px;background:#3b3b3b;border-radius:0;"></div>
<div style="position:absolute;left:693.4px;top:24.8px;width:32.10000000000002px;height:12.8px;background:#1c1c1c;border-radius:0;"></div>
<div style="position:absolute;left:725.5px;top:24.8px;width:23.0px;height:12.8px;background:#555555;border-radius:0;"></div>
<div style="position:absolute;left:749.5px;top:24.8px;width:15.0px;height:12.8px;background:#4b4b4b;border-radius:0 3px 3px 0;"></div>
<div style="position:absolute;left:748.5px;top:24.8px;width:1px;height:12.8px;background:#363636;border-radius:0;"></div>
<svg style="position:absolute;left:669.70px;top:24.40px" width="13.60" height="13.60" viewBox="-6.80 -6.80 13.60 13.60"><circle cx="0" cy="0" r="5.20" fill="none" stroke="#e6e6e6" stroke-width="1.2"/><path d="M0 1.3 L0 -5.20 A5.20 5.20 0 0 0 -5.05 1.3 Z" fill="#e6e6e6"/><path d="M0 0 L5.20 0 A5.20 5.20 0 0 1 0 5.20 Z" fill="#e6e6e6"/></svg>
<svg style="position:absolute;left:683.9px;top:29.6px" width="7" height="5.4"><path d="M1 1 L3.5 4.4 L6 1" fill="none" stroke="#d8d8d8" stroke-width="1.1"/></svg>
<div class="t" style="left:698.9px;top:24.80px;font-size:10.2px;color:#e2e2e2;transform:scaleX(0.95);transform-origin:0 50%;">Oth...</div>
<div class="t" style="left:725.5px;width:23.0px;top:24.80px;font-size:10.2px;color:#e2e2e2;text-align:center;transform:scaleX(0.95);transform-origin:50% 50%;">12</div>
<svg style="position:absolute;left:750.00px;top:24.20px" width="12" height="14"><path d="M6 1.3 L10.6 3.4 L10.6 8 Q10.2 10.6 6 12.5 Q1.8 10.6 1.4 8 L1.4 3.4 Z" fill="none" stroke="#a4a4a4" stroke-width="1.1" stroke-linejoin="miter"/></svg>
<div style="position:absolute;left:627px;top:62px;width:159px;height:116.5px;background:#303030;border-radius:3px;box-shadow:0 0 1.5px 0.5px rgba(0,0,0,0.5), 1px 2px 7px rgba(0,0,0,0.5)"></div>
<div style="position:absolute;left:627px;top:62px;width:159px;height:16px;background:#354822;border-radius:3px 3px 0 0;box-shadow:0 1px 0 #21271b"></div>
<svg style="position:absolute;left:635px;top:67.2px" width="8.8" height="5.5"><path d="M1 1 L4.4 4.5 L7.8 1" fill="none" stroke="#d8d8d8" stroke-width="1.1"/></svg>
<div class="t" style="left:648px;top:63.20px;font-size:10.2px;color:#ececec;transform:scaleX(0.95);transform-origin:0 50%;">OtherDataTex2</div>
<svg style="position:absolute;left:767px;top:63.7px" width="13" height="13"><rect x="2" y="0.4" width="7" height="4.9" rx="1.2" fill="#e8e8e8"/><rect x="2.5" y="3.4" width="6" height="1.2" fill="#9aa08f"/><rect x="1.4" y="7.6" width="5.4" height="4.1" rx="1" fill="none" stroke="#e8e8e8" stroke-width="1.3"/><rect x="1.4" y="7.8" width="5.4" height="1.9" fill="#e8e8e8"/><path d="M9.6 2.2 Q11.2 2.2 11.2 4 L11.2 8.6 Q11.2 10.2 9.4 10.2 L8.4 10.2" fill="none" stroke="#d8d8d8" stroke-width="1.1"/><path d="M7.4 10.2 L9 8.8 L9 11.6 Z" fill="#e8e8e8"/></svg>
<div class="t" style="right:661px;top:83.90px;font-size:10.2px;color:#e2e2e2;text-align:right;transform:scaleX(0.95);transform-origin:100% 50%;">Color1</div>
<div style="position:absolute;left:782.20px;top:86.20px;width:7.60px;height:7.60px;border-radius:50%;background:#c9c92b;box-shadow:0 0 0 0.8px rgba(0,0,0,0.6)"></div>
<div class="t" style="right:661px;top:102.30px;font-size:10.2px;color:#e2e2e2;text-align:right;transform:scaleX(0.95);transform-origin:100% 50%;">Alpha1</div>
<div style="position:absolute;left:782.20px;top:104.60px;width:7.60px;height:7.60px;border-radius:50%;background:#ababab;box-shadow:0 0 0 0.8px rgba(0,0,0,0.6)"></div>
<div class="t" style="right:661px;top:120.70px;font-size:10.2px;color:#e2e2e2;text-align:right;transform:scaleX(0.95);transform-origin:100% 50%;">Color2</div>
<div style="position:absolute;left:782.20px;top:123.00px;width:7.60px;height:7.60px;border-radius:50%;background:#c9c92b;box-shadow:0 0 0 0.8px rgba(0,0,0,0.6)"></div>
<div class="t" style="right:661px;top:138.60px;font-size:10.2px;color:#e2e2e2;text-align:right;transform:scaleX(0.95);transform-origin:100% 50%;">Alpha2</div>
<div style="position:absolute;left:782.20px;top:140.90px;width:7.60px;height:7.60px;border-radius:50%;background:#ababab;box-shadow:0 0 0 0.8px rgba(0,0,0,0.6)"></div>
<div style="position:absolute;box-sizing:border-box;left:634.8px;top:157.8px;width:141.5px;height:15.2px;background:#282828;border:1px solid #3b3b3b;border-radius:3px"></div>
<div style="position:absolute;left:660px;top:158.8px;width:1px;height:13.2px;background:#3b3b3b;border-radius:0;"></div>
<div style="position:absolute;left:661px;top:158.8px;width:79.29999999999995px;height:13.2px;background:#1c1c1c;border-radius:0;"></div>
<div style="position:absolute;left:740.3px;top:158.8px;width:19.700000000000045px;height:13.2px;background:#555555;border-radius:0;"></div>
<div style="position:absolute;left:761px;top:158.8px;width:15.299999999999955px;height:13.2px;background:#4b4b4b;border-radius:0 3px 3px 0;"></div>
<div style="position:absolute;left:760px;top:158.8px;width:1px;height:13.2px;background:#363636;border-radius:0;"></div>
<svg style="position:absolute;left:637.20px;top:158.60px" width="13.60" height="13.60" viewBox="-6.80 -6.80 13.60 13.60"><circle cx="0" cy="0" r="5.20" fill="none" stroke="#e6e6e6" stroke-width="1.2"/><path d="M0 1.3 L0 -5.20 A5.20 5.20 0 0 0 -5.05 1.3 Z" fill="#e6e6e6"/><path d="M0 0 L5.20 0 A5.20 5.20 0 0 1 0 5.20 Z" fill="#e6e6e6"/></svg>
<svg style="position:absolute;left:651.4px;top:163.8px" width="7" height="5.4"><path d="M1 1 L3.5 4.4 L6 1" fill="none" stroke="#d8d8d8" stroke-width="1.1"/></svg>
<div class="t" style="left:666.5px;top:159.00px;font-size:10.2px;color:#e2e2e2;transform:scaleX(0.95);transform-origin:0 50%;">OtherDataTex2</div>
<div class="t" style="left:740.3px;width:19.700000000000045px;top:159.00px;font-size:10.2px;color:#e2e2e2;text-align:center;transform:scaleX(0.95);transform-origin:50% 50%;">3</div>
<svg style="position:absolute;left:761.65px;top:158.40px" width="12" height="14"><path d="M6 1.3 L10.6 3.4 L10.6 8 Q10.2 10.6 6 12.5 Q1.8 10.6 1.4 8 L1.4 3.4 Z" fill="none" stroke="#a4a4a4" stroke-width="1.1" stroke-linejoin="miter"/></svg>
<div style="position:absolute;left:1047.8px;top:-20px;width:229.10000000000005px;height:658.6px;background:#212121;border:1.2px solid #ececec;border-radius:3px;box-shadow:0 1px 5px rgba(0,0,0,0.5)"></div>
<div style="position:absolute;left:1044.50px;top:5.60px;width:7.60px;height:7.60px;border-radius:50%;background:#c9c92b;box-shadow:0 0 0 0.8px rgba(0,0,0,0.6)"></div>
<div class="t" style="left:1057px;top:3.30px;font-size:10.2px;color:#e2e2e2;transform:scaleX(0.95);transform-origin:0 50%;">ShadowColor4</div>
<div style="position:absolute;left:1146px;top:2.80px;width:123px;height:14px;background:#b38787;border-radius:2px;box-shadow:0 0 1px 1px rgba(0,0,0,0.35)"></div>
<div style="position:absolute;left:1044.50px;top:23.97px;width:7.60px;height:7.60px;border-radius:50%;background:#c9c92b;box-shadow:0 0 0 0.8px rgba(0,0,0,0.6)"></div>
<div class="t" style="left:1057px;top:21.67px;font-size:10.2px;color:#e2e2e2;transform:scaleX(0.95);transform-origin:0 50%;">ShadowColor5</div>
<div style="position:absolute;left:1146px;top:21.17px;width:123px;height:14px;background:#d0a9b8;border-radius:2px;box-shadow:0 0 1px 1px rgba(0,0,0,0.35)"></div>
<div style="position:absolute;left:1044.50px;top:42.34px;width:7.60px;height:7.60px;border-radius:50%;background:#c9c92b;box-shadow:0 0 0 0.8px rgba(0,0,0,0.6)"></div>
<div class="t" style="left:1057px;top:40.04px;font-size:10.2px;color:#e2e2e2;transform:scaleX(0.95);transform-origin:0 50%;">ShallowColor1</div>
<div style="position:absolute;left:1146px;top:39.54px;width:123px;height:14px;background:#efdfdf;border-radius:2px;box-shadow:0 0 1px 1px rgba(0,0,0,0.35)"></div>
<div style="position:absolute;left:1044.50px;top:60.71px;width:7.60px;height:7.60px;border-radius:50%;background:#c9c92b;box-shadow:0 0 0 0.8px rgba(0,0,0,0.6)"></div>
<div class="t" style="left:1057px;top:58.41px;font-size:10.2px;color:#e2e2e2;transform:scaleX(0.95);transform-origin:0 50%;">ShallowColor2</div>
<div style="position:absolute;left:1146px;top:57.91px;width:123px;height:14px;background:#a6a3b8;border-radius:2px;box-shadow:0 0 1px 1px rgba(0,0,0,0.35)"></div>
<div style="position:absolute;left:1044.50px;top:79.08px;width:7.60px;height:7.60px;border-radius:50%;background:#c9c92b;box-shadow:0 0 0 0.8px rgba(0,0,0,0.6)"></div>
<div class="t" style="left:1057px;top:76.78px;font-size:10.2px;color:#e2e2e2;transform:scaleX(0.95);transform-origin:0 50%;">ShallowColor3</div>
<div style="position:absolute;left:1146px;top:76.28px;width:123px;height:14px;background:#dae3e9;border-radius:2px;box-shadow:0 0 1px 1px rgba(0,0,0,0.35)"></div>
<div style="position:absolute;left:1044.50px;top:97.45px;width:7.60px;height:7.60px;border-radius:50%;background:#c9c92b;box-shadow:0 0 0 0.8px rgba(0,0,0,0.6)"></div>
<div class="t" style="left:1057px;top:95.15px;font-size:10.2px;color:#e2e2e2;transform:scaleX(0.95);transform-origin:0 50%;">ShallowColor4</div>
<div style="position:absolute;left:1146px;top:94.65px;width:123px;height:14px;background:#e7bdbd;border-radius:2px;box-shadow:0 0 1px 1px rgba(0,0,0,0.35)"></div>
<div style="position:absolute;left:1044.50px;top:115.82px;width:7.60px;height:7.60px;border-radius:50%;background:#c9c92b;box-shadow:0 0 0 0.8px rgba(0,0,0,0.6)"></div>
<div class="t" style="left:1057px;top:113.52px;font-size:10.2px;color:#e2e2e2;transform:scaleX(0.95);transform-origin:0 50%;">ShallowColor5</div>
<div style="position:absolute;left:1146px;top:113.02px;width:123px;height:14px;background:#e8d7e0;border-radius:2px;box-shadow:0 0 1px 1px rgba(0,0,0,0.35)"></div>
<div style="position:absolute;left:1049.7px;top:131.3px;width:227.3px;height:19px;background:#2d2d2d;border-radius:0;"></div>
<svg style="position:absolute;left:1056px;top:138.7px" width="10" height="6"><path d="M1 1 L5.0 5 L9 1" fill="none" stroke="#b8b8b8" stroke-width="1.2"/></svg>
<div class="t" style="left:1069px;top:135.10px;font-size:10.2px;color:#e2e2e2;transform:scaleX(0.95);transform-origin:0 50%;">MatCap</div>
<div style="position:absolute;left:1044.50px;top:158.50px;width:7.60px;height:7.60px;border-radius:50%;background:#cca6d6;box-shadow:0 0 0 0.8px rgba(0,0,0,0.6)"></div>
<div style="position:absolute;left:1057px;top:158.0px;width:10px;height:10px;background:#4772b3;border-radius:2px"></div>
<svg style="position:absolute;left:1057px;top:158.0px" width="10" height="10"><path d="M1.8 5.4 L4.6 7.6 L8.8 2.2" fill="none" stroke="#fff" stroke-width="1.7"/></svg>
<div class="t" style="left:1070px;top:156.20px;font-size:10.2px;color:#e2e2e2;transform:scaleX(0.95);transform-origin:0 50%;">UseMatCap?</div>
<div style="position:absolute;left:1044.50px;top:176.77px;width:7.60px;height:7.60px;border-radius:50%;background:#c9c92b;box-shadow:0 0 0 0.8px rgba(0,0,0,0.6)"></div>
<div class="t" style="left:1057px;top:174.47px;font-size:10.2px;color:#e2e2e2;transform:scaleX(0.95);transform-origin:0 50%;">MatCapTex1</div>
<div style="position:absolute;left:1146px;top:173.97px;width:123px;height:14px;background:#ffffff;border-radius:2px;box-shadow:0 0 1px 1px rgba(0,0,0,0.35)"></div>
<div style="position:absolute;left:1044.50px;top:195.14px;width:7.60px;height:7.60px;border-radius:50%;background:#c9c92b;box-shadow:0 0 0 0.8px rgba(0,0,0,0.6)"></div>
<div class="t" style="left:1057px;top:192.84px;font-size:10.2px;color:#e2e2e2;transform:scaleX(0.95);transform-origin:0 50%;">MatCapTex2</div>
<div style="position:absolute;left:1044.50px;top:213.51px;width:7.60px;height:7.60px;border-radius:50%;background:#c9c92b;box-shadow:0 0 0 0.8px rgba(0,0,0,0.6)"></div>
<div class="t" style="left:1057px;top:211.21px;font-size:10.2px;color:#e2e2e2;transform:scaleX(0.95);transform-origin:0 50%;">MatCapTex3</div>
<div style="position:absolute;left:1044.50px;top:231.88px;width:7.60px;height:7.60px;border-radius:50%;background:#c9c92b;box-shadow:0 0 0 0.8px rgba(0,0,0,0.6)"></div>
<div class="t" style="left:1057px;top:229.58px;font-size:10.2px;color:#e2e2e2;transform:scaleX(0.95);transform-origin:0 50%;">MatCapTex4</div>
<div style="position:absolute;left:1146px;top:229.08px;width:123px;height:14px;background:#ffffff;border-radius:2px;box-shadow:0 0 1px 1px rgba(0,0,0,0.35)"></div>
<div style="position:absolute;left:1044.50px;top:250.25px;width:7.60px;height:7.60px;border-radius:50%;background:#c9c92b;box-shadow:0 0 0 0.8px rgba(0,0,0,0.6)"></div>
<div class="t" style="left:1057px;top:247.95px;font-size:10.2px;color:#e2e2e2;transform:scaleX(0.95);transform-origin:0 50%;">MatCapTex5</div>
<div style="position:absolute;left:1044.50px;top:268.62px;width:7.60px;height:7.60px;border-radius:50%;background:#c9c92b;box-shadow:0 0 0 0.8px rgba(0,0,0,0.6)"></div>
<div class="t" style="left:1057px;top:266.32px;font-size:10.2px;color:#e2e2e2;transform:scaleX(0.95);transform-origin:0 50%;">MatCapTintColor1</div>
<div style="position:absolute;left:1146px;top:265.82px;width:123px;height:14px;background:#ffffff;border-radius:2px;box-shadow:0 0 1px 1px rgba(0,0,0,0.35)"></div>
<div style="position:absolute;left:1044.50px;top:286.99px;width:7.60px;height:7.60px;border-radius:50%;background:#c9c92b;box-shadow:0 0 0 0.8px rgba(0,0,0,0.6)"></div>
<div class="t" style="left:1057px;top:284.69px;font-size:10.2px;color:#e2e2e2;transform:scaleX(0.95);transform-origin:0 50%;">MatCapTintColor2</div>
<div style="position:absolute;left:1146px;top:284.19px;width:123px;height:14px;background:#ffffff;border-radius:2px;box-shadow:0 0 1px 1px rgba(0,0,0,0.35)"></div>
<div style="position:absolute;left:1044.50px;top:305.36px;width:7.60px;height:7.60px;border-radius:50%;background:#c9c92b;box-shadow:0 0 0 0.8px rgba(0,0,0,0.6)"></div>
<div class="t" style="left:1057px;top:303.06px;font-size:10.2px;color:#e2e2e2;transform:scaleX(0.95);transform-origin:0 50%;">MatCapTintColor3</div>
<div style="position:absolute;left:1146px;top:302.56px;width:123px;height:14px;background:#ffffff;border-radius:2px;box-shadow:0 0 1px 1px rgba(0,0,0,0.35)"></div>
<div style="position:absolute;left:1044.50px;top:323.73px;width:7.60px;height:7.60px;border-radius:50%;background:#c9c92b;box-shadow:0 0 0 0.8px rgba(0,0,0,0.6)"></div>
<div class="t" style="left:1057px;top:321.43px;font-size:10.2px;color:#e2e2e2;transform:scaleX(0.95);transform-origin:0 50%;">MatCapTintColor4</div>
<div style="position:absolute;left:1146px;top:320.93px;width:123px;height:14px;background:#ffffff;border-radius:2px;box-shadow:0 0 1px 1px rgba(0,0,0,0.35)"></div>
<div style="position:absolute;left:1044.50px;top:342.10px;width:7.60px;height:7.60px;border-radius:50%;background:#c9c92b;box-shadow:0 0 0 0.8px rgba(0,0,0,0.6)"></div>
<div class="t" style="left:1057px;top:339.80px;font-size:10.2px;color:#e2e2e2;transform:scaleX(0.95);transform-origin:0 50%;">MatCapTintColor5</div>
<div style="position:absolute;left:1146px;top:339.30px;width:123px;height:14px;background:#e3c9c0;border-radius:2px;box-shadow:0 0 1px 1px rgba(0,0,0,0.35)"></div>
<div style="position:absolute;left:1044.50px;top:360.70px;width:7.60px;height:7.60px;border-radius:50%;background:#ababab;box-shadow:0 0 0 0.8px rgba(0,0,0,0.6)"></div>
<div style="position:absolute;left:1056px;top:356.6px;width:213.5px;height:16px;background:#545454;border-radius:3px;box-shadow:0 1px 1px rgba(0,0,0,0.35)"></div>
<div class="t" style="left:1069px;top:358.50px;font-size:10.2px;color:#e2e2e2;transform:scaleX(0.95);transform-origin:0 50%;">MatCapColorBurst1</div>
<div class="t" style="right:178.5px;top:358.50px;font-size:10.2px;color:#e2e2e2;text-align:right;transform:scaleX(0.95);transform-origin:100% 50%;">0.610</div>
<div style="position:absolute;left:1044.50px;top:379.07px;width:7.60px;height:7.60px;border-radius:50%;background:#ababab;box-shadow:0 0 0 0.8px rgba(0,0,0,0.6)"></div>
<div style="position:absolute;left:1056px;top:374.97px;width:213.5px;height:16px;background:#545454;border-radius:3px;box-shadow:0 1px 1px rgba(0,0,0,0.35)"></div>
<div class="t" style="left:1069px;top:376.87px;font-size:10.2px;color:#e2e2e2;transform:scaleX(0.95);transform-origin:0 50%;">MatCapColorBurst2</div>
<div class="t" style="right:178.5px;top:376.87px;font-size:10.2px;color:#e2e2e2;text-align:right;transform:scaleX(0.95);transform-origin:100% 50%;">0.600</div>
<div style="position:absolute;left:1044.50px;top:397.44px;width:7.60px;height:7.60px;border-radius:50%;background:#ababab;box-shadow:0 0 0 0.8px rgba(0,0,0,0.6)"></div>
<div style="position:absolute;left:1056px;top:393.34000000000003px;width:213.5px;height:16px;background:#545454;border-radius:3px;box-shadow:0 1px 1px rgba(0,0,0,0.35)"></div>
<div class="t" style="left:1069px;top:395.24px;font-size:10.2px;color:#e2e2e2;transform:scaleX(0.95);transform-origin:0 50%;">MatCapColorBurst3</div>
<div class="t" style="right:178.5px;top:395.24px;font-size:10.2px;color:#e2e2e2;text-align:right;transform:scaleX(0.95);transform-origin:100% 50%;">0.350</div>
<div style="position:absolute;left:1044.50px;top:415.81px;width:7.60px;height:7.60px;border-radius:50%;background:#ababab;box-shadow:0 0 0 0.8px rgba(0,0,0,0.6)"></div>
<div style="position:absolute;left:1056px;top:411.71000000000004px;width:213.5px;height:16px;background:#545454;border-radius:3px;box-shadow:0 1px 1px rgba(0,0,0,0.35)"></div>
<div class="t" style="left:1069px;top:413.61px;font-size:10.2px;color:#e2e2e2;transform:scaleX(0.95);transform-origin:0 50%;">MatCapColorBurst4</div>
<div class="t" style="right:178.5px;top:413.61px;font-size:10.2px;color:#e2e2e2;text-align:right;transform:scaleX(0.95);transform-origin:100% 50%;">1.000</div>
<div style="position:absolute;left:1044.50px;top:434.18px;width:7.60px;height:7.60px;border-radius:50%;background:#ababab;box-shadow:0 0 0 0.8px rgba(0,0,0,0.6)"></div>
<div style="position:absolute;left:1056px;top:430.08000000000004px;width:213.5px;height:16px;background:#545454;border-radius:3px;box-shadow:0 1px 1px rgba(0,0,0,0.35)"></div>
<div class="t" style="left:1069px;top:431.98px;font-size:10.2px;color:#e2e2e2;transform:scaleX(0.95);transform-origin:0 50%;">MatCapColorBurst5</div>
<div class="t" style="right:178.5px;top:431.98px;font-size:10.2px;color:#e2e2e2;text-align:right;transform:scaleX(0.95);transform-origin:100% 50%;">1.010</div>
<div style="position:absolute;left:1044.50px;top:452.55px;width:7.60px;height:7.60px;border-radius:50%;background:#ababab;box-shadow:0 0 0 0.8px rgba(0,0,0,0.6)"></div>
<div style="position:absolute;left:1056px;top:448.45000000000005px;width:213.5px;height:16px;background:#545454;border-radius:3px;box-shadow:0 1px 1px rgba(0,0,0,0.35)"></div>
<div class="t" style="left:1069px;top:450.35px;font-size:10.2px;color:#e2e2e2;transform:scaleX(0.95);transform-origin:0 50%;">MatCapAlphaBurst1</div>
<div class="t" style="right:178.5px;top:450.35px;font-size:10.2px;color:#e2e2e2;text-align:right;transform:scaleX(0.95);transform-origin:100% 50%;">0.280</div>
<div style="position:absolute;left:1044.50px;top:470.92px;width:7.60px;height:7.60px;border-radius:50%;background:#ababab;box-shadow:0 0 0 0.8px rgba(0,0,0,0.6)"></div>
<div style="position:absolute;left:1056px;top:466.82000000000005px;width:213.5px;height:16px;background:#545454;border-radius:3px;box-shadow:0 1px 1px rgba(0,0,0,0.35)"></div>
<div class="t" style="left:1069px;top:468.72px;font-size:10.2px;color:#e2e2e2;transform:scaleX(0.95);transform-origin:0 50%;">MatCapAlphaBurst2</div>
<div class="t" style="right:178.5px;top:468.72px;font-size:10.2px;color:#e2e2e2;text-align:right;transform:scaleX(0.95);transform-origin:100% 50%;">0.340</div>
<div style="position:absolute;left:1044.50px;top:489.29px;width:7.60px;height:7.60px;border-radius:50%;background:#ababab;box-shadow:0 0 0 0.8px rgba(0,0,0,0.6)"></div>
<div style="position:absolute;left:1056px;top:485.19000000000005px;width:213.5px;height:16px;background:#545454;border-radius:3px;box-shadow:0 1px 1px rgba(0,0,0,0.35)"></div>
<div class="t" style="left:1069px;top:487.09px;font-size:10.2px;color:#e2e2e2;transform:scaleX(0.95);transform-origin:0 50%;">MatCapAlphaBurst3</div>
<div class="t" style="right:178.5px;top:487.09px;font-size:10.2px;color:#e2e2e2;text-align:right;transform:scaleX(0.95);transform-origin:100% 50%;">0.440</div>
<div style="position:absolute;left:1044.50px;top:507.66px;width:7.60px;height:7.60px;border-radius:50%;background:#ababab;box-shadow:0 0 0 0.8px rgba(0,0,0,0.6)"></div>
<div style="position:absolute;left:1056px;top:503.56000000000006px;width:213.5px;height:16px;background:#545454;border-radius:3px;box-shadow:0 1px 1px rgba(0,0,0,0.35)"></div>
<div class="t" style="left:1069px;top:505.46px;font-size:10.2px;color:#e2e2e2;transform:scaleX(0.95);transform-origin:0 50%;">MatCapAlphaBurst4</div>
<div class="t" style="right:178.5px;top:505.46px;font-size:10.2px;color:#e2e2e2;text-align:right;transform:scaleX(0.95);transform-origin:100% 50%;">1.000</div>
<div style="position:absolute;left:1044.50px;top:526.03px;width:7.60px;height:7.60px;border-radius:50%;background:#ababab;box-shadow:0 0 0 0.8px rgba(0,0,0,0.6)"></div>
<div style="position:absolute;left:1056px;top:521.9300000000001px;width:213.5px;height:16px;background:#545454;border-radius:3px;box-shadow:0 1px 1px rgba(0,0,0,0.35)"></div>
<div class="t" style="left:1069px;top:523.83px;font-size:10.2px;color:#e2e2e2;transform:scaleX(0.95);transform-origin:0 50%;">MatCapAlphaBurst5</div>
<div class="t" style="right:178.5px;top:523.83px;font-size:10.2px;color:#e2e2e2;text-align:right;transform:scaleX(0.95);transform-origin:100% 50%;">0.800</div>
<div style="position:absolute;left:1044.50px;top:544.40px;width:7.60px;height:7.60px;border-radius:50%;background:#5b915e;box-shadow:0 0 0 0.8px rgba(0,0,0,0.6)"></div>
<div style="position:absolute;left:1056px;top:540.3000000000001px;width:213.5px;height:16px;background:#545454;border-radius:3px;box-shadow:0 1px 1px rgba(0,0,0,0.35)"></div>
<div class="t" style="left:1069px;top:542.20px;font-size:10.2px;color:#e2e2e2;transform:scaleX(0.95);transform-origin:0 50%;">MatCapBlendMode1</div>
<div class="t" style="right:178.5px;top:542.20px;font-size:10.2px;color:#e2e2e2;text-align:right;transform:scaleX(0.95);transform-origin:100% 50%;">2</div>
<div style="position:absolute;left:1044.50px;top:562.77px;width:7.60px;height:7.60px;border-radius:50%;background:#5b915e;box-shadow:0 0 0 0.8px rgba(0,0,0,0.6)"></div>
<div style="position:absolute;left:1056px;top:558.6700000000001px;width:213.5px;height:16px;background:#545454;border-radius:3px;box-shadow:0 1px 1px rgba(0,0,0,0.35)"></div>
<div class="t" style="left:1069px;top:560.57px;font-size:10.2px;color:#e2e2e2;transform:scaleX(0.95);transform-origin:0 50%;">MatCapBlendMode2</div>
<div class="t" style="right:178.5px;top:560.57px;font-size:10.2px;color:#e2e2e2;text-align:right;transform:scaleX(0.95);transform-origin:100% 50%;">2</div>
<div style="position:absolute;left:1044.50px;top:581.14px;width:7.60px;height:7.60px;border-radius:50%;background:#5b915e;box-shadow:0 0 0 0.8px rgba(0,0,0,0.6)"></div>
<div style="position:absolute;left:1056px;top:577.0400000000001px;width:213.5px;height:16px;background:#545454;border-radius:3px;box-shadow:0 1px 1px rgba(0,0,0,0.35)"></div>
<div class="t" style="left:1069px;top:578.94px;font-size:10.2px;color:#e2e2e2;transform:scaleX(0.95);transform-origin:0 50%;">MatCapBlendMode3</div>
<div class="t" style="right:178.5px;top:578.94px;font-size:10.2px;color:#e2e2e2;text-align:right;transform:scaleX(0.95);transform-origin:100% 50%;">2</div>
<div style="position:absolute;left:1044.50px;top:599.51px;width:7.60px;height:7.60px;border-radius:50%;background:#5b915e;box-shadow:0 0 0 0.8px rgba(0,0,0,0.6)"></div>
<div style="position:absolute;left:1056px;top:595.41px;width:213.5px;height:16px;background:#545454;border-radius:3px;box-shadow:0 1px 1px rgba(0,0,0,0.35)"></div>
<div class="t" style="left:1069px;top:597.31px;font-size:10.2px;color:#e2e2e2;transform:scaleX(0.95);transform-origin:0 50%;">MatCapBlendMode4</div>
<div class="t" style="right:178.5px;top:597.31px;font-size:10.2px;color:#e2e2e2;text-align:right;transform:scaleX(0.95);transform-origin:100% 50%;">0</div>
<div style="position:absolute;left:1044.50px;top:617.88px;width:7.60px;height:7.60px;border-radius:50%;background:#5b915e;box-shadow:0 0 0 0.8px rgba(0,0,0,0.6)"></div>
<div style="position:absolute;left:1056px;top:613.7800000000001px;width:213.5px;height:16px;background:#545454;border-radius:3px;box-shadow:0 1px 1px rgba(0,0,0,0.35)"></div>
<div class="t" style="left:1069px;top:615.68px;font-size:10.2px;color:#e2e2e2;transform:scaleX(0.95);transform-origin:0 50%;">MatCapBlendMode5</div>
<div class="t" style="right:178.5px;top:615.68px;font-size:10.2px;color:#e2e2e2;text-align:right;transform:scaleX(0.95);transform-origin:100% 50%;">0</div>
</body></html>
